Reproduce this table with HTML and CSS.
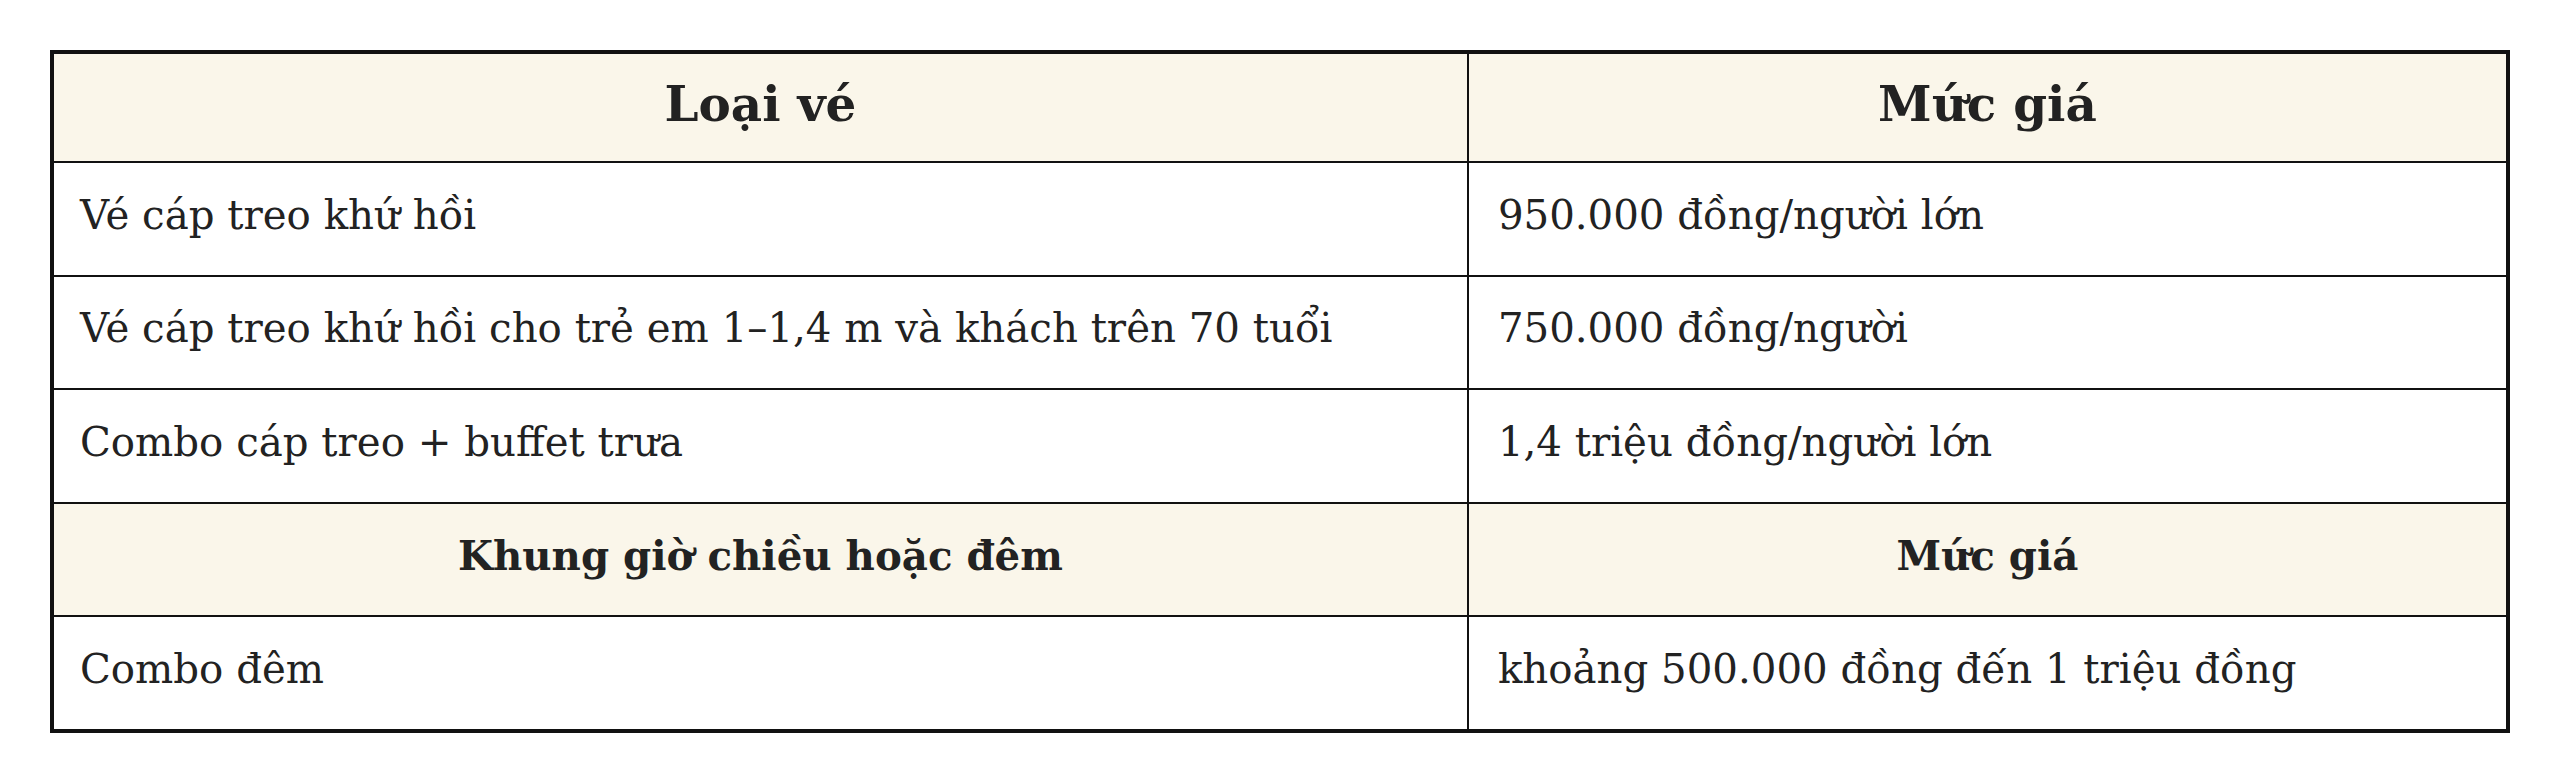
FILE: index.html
```html
<!DOCTYPE html>
<html lang="vi">
<head>
<meta charset="utf-8">
<title>Giá vé cáp treo</title>
<link rel="stylesheet" href="styles.css">
</head>
<body>
<div class="wrap">
<table class="price-table">
  <colgroup>
    <col class="col-type">
    <col class="col-price">
  </colgroup>
  <thead>
    <tr class="head-row">
      <th>Loại vé</th>
      <th>Mức giá</th>
    </tr>
  </thead>
  <tbody>
    <tr>
      <td>Vé cáp treo khứ hồi</td>
      <td>950.000 đồng/người lớn</td>
    </tr>
    <tr>
      <td>Vé cáp treo khứ hồi cho trẻ em 1–1,4 m và khách trên 70 tuổi</td>
      <td>750.000 đồng/người</td>
    </tr>
    <tr>
      <td>Combo cáp treo + buffet trưa</td>
      <td>1,4 triệu đồng/người lớn</td>
    </tr>
    <tr class="sub-head">
      <th>Khung giờ chiều hoặc đêm</th>
      <th>Mức giá</th>
    </tr>
    <tr>
      <td>Combo đêm</td>
      <td>khoảng 500.000 đồng đến 1 triệu đồng</td>
    </tr>
  </tbody>
</table>
</div>
</body>
</html>
```
FILE: styles.css
```css
html, body {
  margin: 0;
  padding: 0;
  background: #ffffff;
}

.wrap {
  padding: 50px;
}

.price-table {
  width: 100%;
  border-collapse: collapse;
  border: 4px solid #111111;
  font-family: "DejaVu Serif", "Liberation Serif", serif;
  color: #222222;
  table-layout: fixed;
}

.col-type {
  width: 57.65%;
}

.col-price {
  width: 42.35%;
}

.price-table th,
.price-table td {
  border: 2px solid #111111;
  padding: 28.5px 29px 35px;
  line-height: 48px;
  font-size: 40.3px;
  text-align: left;
  vertical-align: middle;
}

.price-table td:first-child {
  padding-left: 26px;
}

.price-table th {
  background: #faf6ea;
  text-align: center;
  font-weight: bold;
}

.head-row th {
  font-size: 48.4px;
  padding-top: 26px;
  padding-bottom: 33px;
}
```
